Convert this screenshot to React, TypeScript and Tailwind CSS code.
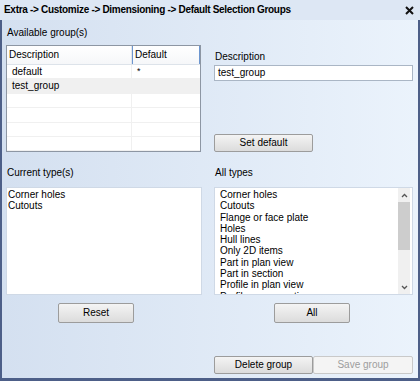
import React from "react";

const btn =
  "flex items-center justify-center rounded-[2px] border border-[#9c9c9c] bg-linear-to-b from-[#f4f4f4] to-[#dcdcdc] text-[10px] text-black";

const allTypes = [
  "Corner holes",
  "Cutouts",
  "Flange or face plate",
  "Holes",
  "Hull lines",
  "Only 2D items",
  "Part in plan view",
  "Part in section",
  "Profile in plan view",
  "Profile cross-section",
];

function Chevron({ up }: { up?: boolean }) {
  return (
    <svg width="7" height="5" viewBox="0 0 7 5">
      <path
        d={up ? "M1 4 L3.5 1.5 L6 4" : "M1 1 L3.5 3.5 L6 1"}
        fill="none"
        stroke="#555"
        strokeWidth="1.3"
      />
    </svg>
  );
}

function GroupTable() {
  const rows = [
    { d: "default", def: "*" },
    { d: "test_group", def: "", sel: true },
    { d: "", def: "" },
    { d: "", def: "" },
    { d: "", def: "" },
    { d: "", def: "" },
  ];
  return (
    <div className="h-[107px] w-[195px] border border-[#8d96a3] bg-white">
      <div className="flex h-[19px] border-b border-[#dde3ea] bg-linear-to-b from-white to-[#f6f7f9]">
        <div className="flex w-[125px] items-center pl-[2px] border-r border-[#e2e6ec]">
          Description
        </div>
        <div className="flex flex-1 items-center border-x border-[#6d96cf] pl-[2px]">
          Default
        </div>
      </div>
      {rows.map((r, i) => (
        <div
          key={i}
          className={
            "flex h-[14.4px] border-b border-[#f0f0f0] " +
            (r.sel ? "bg-[#f0f0f0]" : "bg-white")
          }
        >
          <div className="flex w-[125px] items-center border-r border-[#f0f0f0] pl-[5px]">
            {r.d}
          </div>
          <div className="flex flex-1 items-start pl-[5px] text-[9px] leading-[12px]">
            {r.def}
          </div>
        </div>
      ))}
    </div>
  );
}

export default function App() {
  return (
    <div className="flex h-[381px] w-[420px] flex-col font-['Liberation_Sans',Arial,sans-serif] text-[10px] leading-[12px] text-black">
      <div className="flex h-[20px] items-center justify-between bg-[#dde7f4] pl-[4px] pr-[4px]">
        <span className="text-[10px] font-bold tracking-[-0.3px]">
          Extra -&gt; Customize -&gt; Dimensioning -&gt; Default Selection Groups
        </span>
        <svg width="9" height="9" viewBox="0 0 9 9" className="mr-[2px]">
          <path d="M1 1 L8 8 M8 1 L1 8" stroke="#111" strokeWidth="2" />
        </svg>
      </div>
      <div className="flex flex-1 flex-col border-x-[2px] border-b-[3px] border-[#4d5f88] bg-linear-to-r from-[#d4e0f0] to-[#ebf3fc] pl-[4px]">
        <div className="flex">
          <div className="flex w-[196px] flex-col">
            <div className="mt-[7px] pl-[1px]">Available group(s)</div>
            <div className="mt-[6px]">
              <GroupTable />
            </div>
          </div>
          <div className="ml-[12px] flex w-[199px] flex-col">
            <div className="mt-[31px] pl-[1px]">Description</div>
            <div className="mt-[2px] flex h-[16px] items-center border border-[#aab6c5] bg-white pl-[3px]">
              test_group
            </div>
            <div className={btn + " mt-[53px] h-[18px] w-[99px]"}>Set default</div>
          </div>
        </div>
        <div className="flex">
          <div className="flex w-[196px] flex-col">
            <div className="mt-[15px] pl-[1px]">Current type(s)</div>
            <div className="mt-[8px] h-[108px] border border-[#cfd9e6] bg-white pl-[1px] pt-[1px] leading-[11.3px]">
              <div>Corner holes</div>
              <div>Cutouts</div>
            </div>
            <div className={btn + " ml-[52px] mt-[8px] h-[20px] w-[76px]"}>Reset</div>
          </div>
          <div className="ml-[12px] flex w-[199px] flex-col">
            <div className="mt-[15px] pl-[1px]">All types</div>
            <div className="mt-[8px] flex h-[108px] overflow-hidden border border-[#cfd9e6] bg-white">
              <div className="flex-1 overflow-hidden pl-[5px] pt-[1px] leading-[11.3px]">
                {allTypes.map((t) => (
                  <div key={t} className="whitespace-nowrap">
                    {t}
                  </div>
                ))}
              </div>
              <div className="mr-[2px] flex w-[12px] flex-col bg-[#f0f0f0]">
                <div className="flex h-[14px] items-center justify-center">
                  <Chevron up />
                </div>
                <div className="h-[48px] bg-[#cdcdcd]" />
                <div className="flex-1" />
                <div className="flex h-[14px] items-center justify-center">
                  <Chevron />
                </div>
              </div>
            </div>
            <div className={btn + " ml-[60px] mt-[8px] h-[20px] w-[76px]"}>All</div>
          </div>
        </div>
        <div className="ml-[208px] mt-[33px] flex">
          <div className={btn + " h-[18px] w-[99px]"}>Delete group</div>
          <div className="flex h-[18px] w-[100px] items-center justify-center rounded-[2px] border border-[#c9c9c9] bg-[#f4f4f4] text-[10px] text-[#9d9d9d]">
            Save group
          </div>
        </div>
      </div>
    </div>
  );
}
